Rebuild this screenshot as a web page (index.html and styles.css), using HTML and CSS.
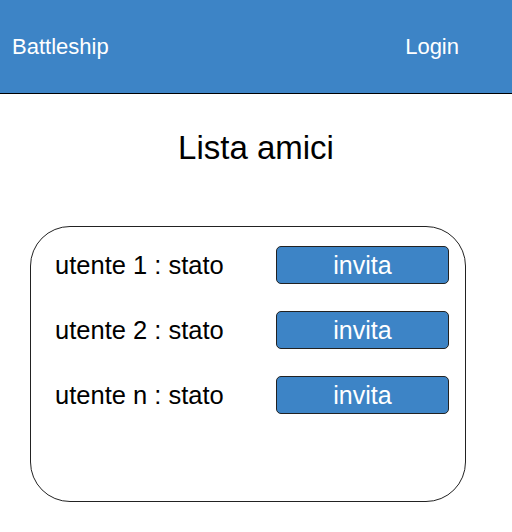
FILE: index.html
```html
<!DOCTYPE html>
<html lang="it">
<head>
<meta charset="utf-8">
<title>Battleship</title>
<link rel="stylesheet" href="styles.css">
</head>
<body>
<header class="topbar">
  <span class="brand">Battleship</span>
  <span class="login">Login</span>
</header>
<main class="content">
  <h1 class="title">Lista amici</h1>
  <section class="card">
    <div class="row">
      <span class="user">utente 1 : stato</span>
      <button class="invite">invita</button>
    </div>
    <div class="row">
      <span class="user">utente 2 : stato</span>
      <button class="invite">invita</button>
    </div>
    <div class="row">
      <span class="user">utente n : stato</span>
      <button class="invite">invita</button>
    </div>
  </section>
</main>
</body>
</html>
```
FILE: styles.css
```css
* { box-sizing: border-box; }
html, body { margin: 0; padding: 0; background: #fff; }
body { font-family: "Liberation Sans", Arial, sans-serif; color: #000; width: 512px; height: 532px; overflow: hidden; }

.topbar {
  height: 94px;
  background: #3d84c6;
  border-bottom: 1px solid #000;
  display: flex;
  align-items: center;
  justify-content: space-between;
  padding: 0 53px 0 12px;
  color: #fff;
  font-size: 22px;
}

.content { display: flex; flex-direction: column; align-items: center; }

.title {
  margin: 34px 0 0;
  font-weight: normal;
  font-size: 33px;
  line-height: 40px;
  height: 40px;
}

.card {
  margin: 58px 0 0 30px;
  align-self: flex-start;
  width: 436px;
  height: 276px;
  border: 1.5px solid #222;
  border-radius: 40px;
  padding: 19px 16px 0 24px;
  display: flex;
  flex-direction: column;
  gap: 27px;
}

.row {
  display: flex;
  align-items: center;
  justify-content: space-between;
  height: 38px;
}

.user { font-size: 25.5px; }

.invite {
  width: 173px;
  height: 38px;
  background: #3d84c6;
  border: 1px solid #222;
  border-radius: 5px;
  color: #fff;
  font-family: "Liberation Sans", Arial, sans-serif;
  font-size: 25px;
  padding: 0;
  line-height: 36px;
}
```
